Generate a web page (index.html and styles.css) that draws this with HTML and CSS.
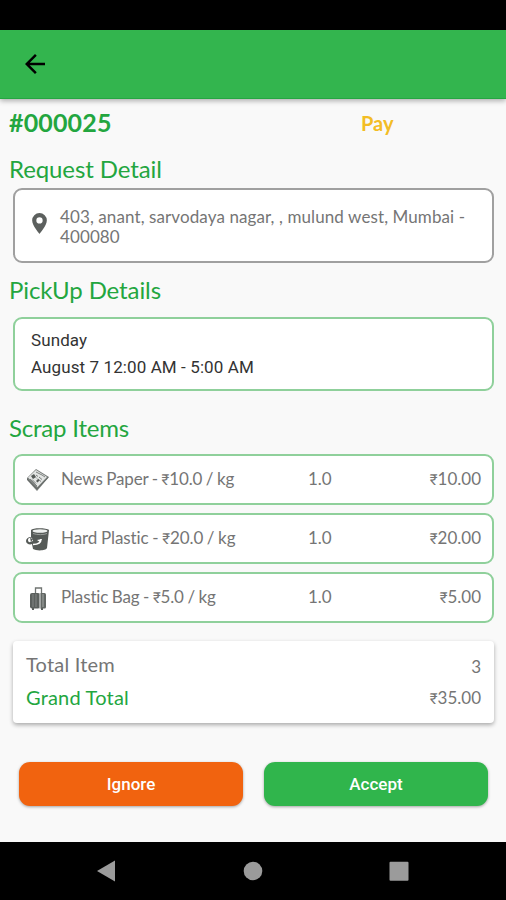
FILE: index.html
```html
<!DOCTYPE html>
<html lang="en">
<head>
<meta charset="utf-8">
<title>Request Detail</title>
<link rel="stylesheet" href="styles.css">
</head>
<body>
<div class="status-bar"></div>
<header class="app-bar">
  <svg class="back" viewBox="0 0 24 24"><path d="M20 11H7.8l5.6-5.6L12 4l-8 8 8 8 1.4-1.4L7.8 13H20z"/></svg>
</header>
<main class="content">
  <div class="order"><span class="order-id">#000025</span><span class="pay">Pay</span></div>
  <h2 class="heading request">Request Detail</h2>
  <section class="card address">
    <svg class="pin" viewBox="0 0 14 20"><path fill-rule="evenodd" d="M7 0a7 7 0 0 0-7 7c0 5.2 7 13 7 13s7-7.800 7-13a7 7 0 0 0-7-7zm0 4.100a3 3 0 1 1 0 6 3 3 0 0 1 0-6z"/></svg>
    <p class="address-text">403, anant, sarvodaya nagar, , mulund west, Mumbai -<br>400080</p>
  </section>
  <h2 class="heading pickup">PickUp Details</h2>
  <section class="card schedule">
    <p class="day">Sunday</p>
    <p class="time">August 7 12:00 AM - 5:00 AM</p>
  </section>
  <h2 class="heading scrap">Scrap Items</h2>
  <div class="items">
    <div class="card item">
      <svg class="item-icon" viewBox="0 0 24 24">
        <path fill="#777b79" d="M1 10 10 1l13 8-12 14L1 12z"/>
        <path fill="#e3e5e4" d="m2 9.500 8-7.500 11 7-9.500 10z"/>
        <path fill="none" stroke="#7d817f" d="m10 4 6 3m0 0 3 2M13 9l3 2.500m-4-.5 3 2.500M4 11l7 7m-1-11 2 1.500m-2 1 1 1m-5 1 4 4"/>
        <path fill="#565b58" d="m5 8 3-2 2 3-3 2zm5 5 2-2 1.500 1.500-2 2z"/>
        <path fill="none" stroke="#666b68" d="m1 11 10 10L22 9.500"/>
      </svg>
      <span class="name">News Paper - <span class="rupee">₹</span>10.0 / kg</span>
      <span class="quantity">1.0</span><span class="price"><span class="rupee">₹</span>10.00</span>
    </div>
    <div class="card item">
      <svg class="item-icon" viewBox="0 0 24 24">
        <path fill="#555a57" d="M5 3c2-2.500 16-2 18 0l-2 18c-1 3-11 3-14 1l-1-5c-2 1-6 0-6-3 0-2 2-4 5-4z"/>
        <ellipse cx="14" cy="4" rx="7.500" ry="1.700" fill="#edf0ee"/>
        <path fill="none" stroke="#a9adab" stroke-width=".8" d="M7 6.500c4 1.500 11 1.500 14 0"/>
        <path fill="none" stroke="#fff" stroke-width="1.500" d="M7 17.500c5 0 8-2 8-5.500"/>
        <path fill="#fff" d="M2 13c0-2 2-2.500 4-2l1 3-3 1c-1 .5-2-.5-2-2zm9 0 5-1-2 3z"/>
        <path fill="#555a57" d="m4 11 3 1-2 3z"/>
      </svg>
      <span class="name plastic">Hard Plastic - <span class="rupee">₹</span>20.0 / kg</span>
      <span class="quantity">1.0</span><span class="price"><span class="rupee">₹</span>20.00</span>
    </div>
    <div class="card item">
      <svg class="item-icon" viewBox="0 0 24 24">
        <path fill="none" stroke="#707472" stroke-width="1.300" d="M9.500 9V2h6v7"/>
        <rect x="4" y="7" width="10" height="15.500" rx="2" fill="#5b605d"/>
        <rect x="13" y="7" width="7" height="15.500" rx="1.500" fill="#626764"/>
        <path fill="none" stroke="#8d918f" stroke-width=".8" d="M7 8v13m3-13v13"/>
        <path fill="none" stroke="#e4e6e5" d="M14 7v15.500"/>
        <path fill="none" stroke="#b8bbb9" stroke-width=".8" d="M17 8v13"/>
        <path fill="#5b605d" d="M6 22h2v2H6zm9 0h2v2h-2z"/>
      </svg>
      <span class="name">Plastic Bag - <span class="rupee">₹</span>5.0 / kg</span>
      <span class="quantity">1.0</span><span class="price"><span class="rupee">₹</span>5.00</span>
    </div>
  </div>
  <section class="totals">
    <div class="total-row"><span class="total-label">Total Item</span><span class="price count">3</span></div>
    <div class="total-row"><span class="total-label grand">Grand Total</span><span class="price"><span class="rupee">₹</span>35.00</span></div>
  </section>
  <div class="actions">
    <button class="button ignore">Ignore</button>
    <button class="button accept">Accept</button>
  </div>
</main>
<nav class="nav-bar">
  <svg class="nav-icon" viewBox="0 0 20 22"><path d="M1 11 19 0.500v21z"/></svg>
  <svg class="nav-icon" viewBox="0 0 20 22"><circle cx="10" cy="11" r="9.300"/></svg>
  <svg class="nav-icon" viewBox="0 0 20 22"><rect x=".5" y="1.700" width="19" height="19" rx="1"/></svg>
</nav>
</body>
</html>
```
FILE: styles.css
```css
* { box-sizing: border-box; }
body {
  margin: 0;
  height: 900px;
  display: flex;
  flex-direction: column;
  background: #f9f9f9;
  font-family: Lato, "Liberation Sans", sans-serif;
  color: #757575;
  overflow: hidden;
}
h2, p { margin: 0; }
.status-bar { height: 30px; background: #000; }
.app-bar {
  height: 69px;
  padding: 0 20px;
  display: flex;
  align-items: center;
  background: #33b54e;
  border-bottom: 1px solid #25a642;
  box-shadow: 0 2px 5px rgba(0, 0, 0, .3);
}
.back { width: 30px; height: 30px; fill: #000; }
.content { height: 743px; display: flex; flex-direction: column; }
.order { height: 48px; padding-left: 9px; display: flex; line-height: 47px; }
.order-id { width: 352px; font-size: 25px; font-weight: 700; line-height: 46px; letter-spacing: .15px; color: #23a63f; }
.pay { font-size: 20px; font-weight: 700; line-height: 48px; color: #f3bd25; }
.heading { padding-left: 9px; font-size: 24px; font-weight: 400; line-height: 28px; letter-spacing: -.1px; color: #23a63f; }
.request { margin-top: 8px; }
.pickup { margin-top: 13px; }
.scrap { margin-top: 23px; letter-spacing: -.2px; }
.card { margin: 0 12px 0 13px; border: 2px solid #8fd09b; border-radius: 9px; background: #fff; }
.address { height: 75px; margin-top: 5px; padding: 2px 0 0 17px; display: flex; align-items: center; border-color: #a0a0a0; }
.pin { width: 15px; height: 21px; margin: -6px 13px 0 0; fill: #5c605e; }
.address-text { font-size: 17px; line-height: 20px; letter-spacing: .1px; white-space: nowrap; }
.schedule { height: 74px; margin-top: 13px; padding: 8px 16px; font: 17px/27px Roboto, sans-serif; letter-spacing: .1px; color: #333; }
.items { display: flex; flex-direction: column; gap: 8px; margin-top: 12px; }
.item { height: 51px; padding: 0 11px; display: flex; align-items: center; font-size: 17px; }
.item-icon { width: 24px; height: 24px; margin-right: 11px; }
.item > span { padding-bottom: 2px; }
.name { width: 247px; letter-spacing: -.15px; word-spacing: -.6px; white-space: nowrap; }
.plastic { letter-spacing: -.08px; }
.price { margin-left: auto; font-size: 17px; }
.rupee { font-family: Roboto, sans-serif; font-size: 15px; }
.totals { height: 82px; margin: 18px 12px 0 13px; padding: 8px 13px; border-radius: 4px; background: #fff; box-shadow: 0 2px 4px rgba(0, 0, 0, .32); }
.total-row { height: 33px; display: flex; align-items: center; }
.total-label { padding-bottom: 3px; font-size: 20px; letter-spacing: .2px; }
.count { padding-top: 2px; }
.grand { color: #23a63f; }
.totals .price:not(.count) { padding-bottom: 2px; }
.actions { display: flex; gap: 21px; padding: 39px 18px 0 19px; }
.button { flex: 1; height: 44px; padding: 0; border: 0; border-radius: 11px; color: #fff; font: 500 17px Roboto, sans-serif; box-shadow: 0 1px 3px rgba(0, 0, 0, .35); }
.ignore { background: #f1630f; }
.accept { background: #30b54c; }
.nav-bar { height: 58px; display: flex; justify-content: space-between; align-items: center; padding: 0 97px 0 96px; background: #000; }
.nav-icon { width: 20px; height: 22px; fill: #9b9b9b; }
```
